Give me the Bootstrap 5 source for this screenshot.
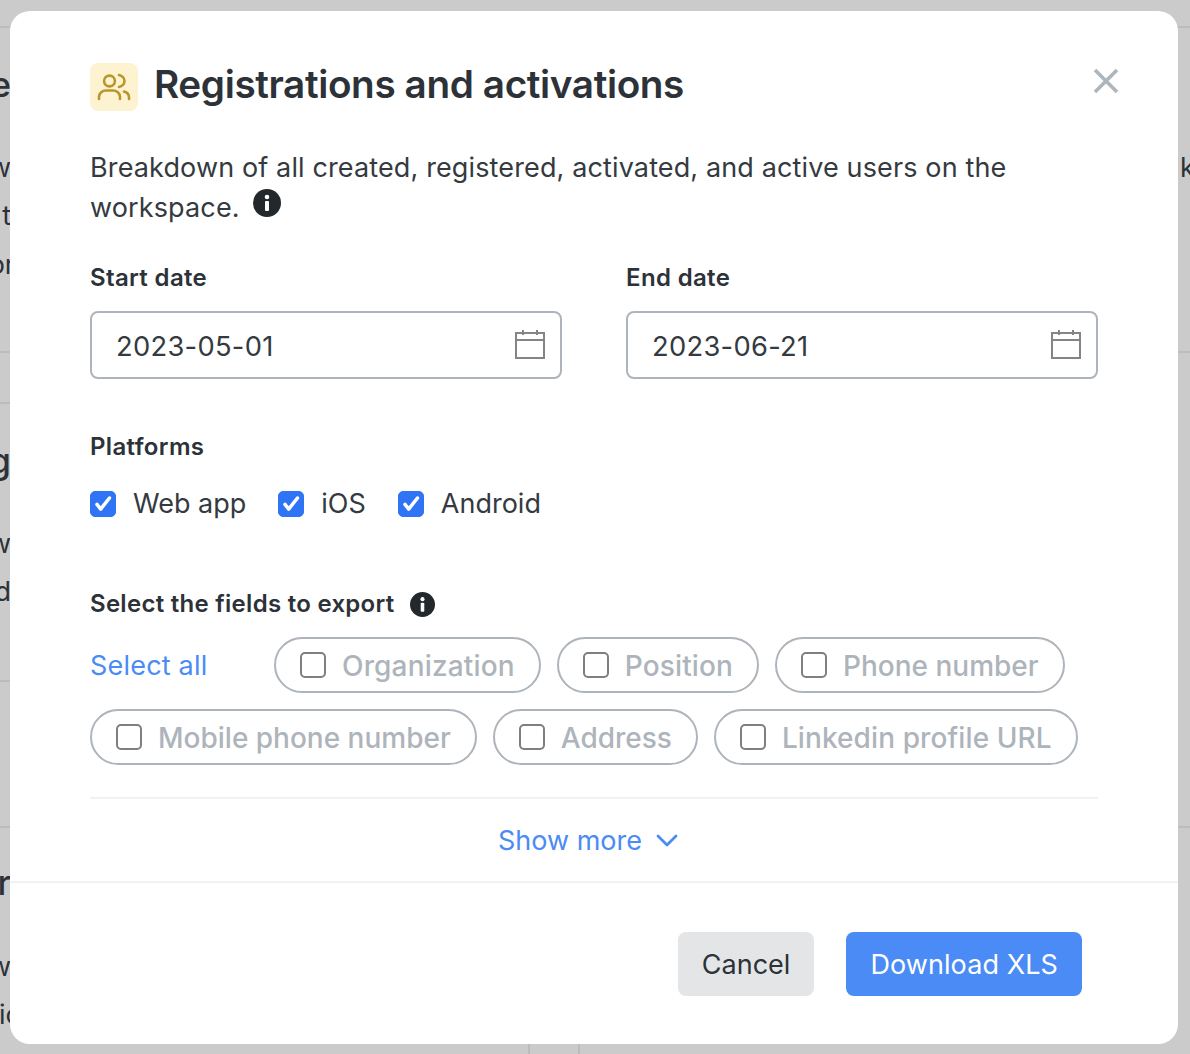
<!DOCTYPE html>
<html lang="en">
<head>
<meta charset="utf-8">
<title>Registrations and activations</title>
<link href="https://cdn.jsdelivr.net/npm/bootstrap@5.3.0/dist/css/bootstrap.min.css" rel="stylesheet">
<style>
html,body{height:100%;}
body{background:#cbcbcb;font-family:Inter,"Liberation Sans",sans-serif;color:#2c3238;overflow:hidden;position:relative;width:1190px;height:1054px;}
.bg-line{position:absolute;height:2px;background:#bcbcbc;left:0;width:1190px;}
.l1{top:26px}.l2{top:351px}.l3{top:402px;width:10px}.l4{top:680px;width:10px}.l5{top:826px}
.bg-vline{position:absolute;width:2px;background:#bcbcbc;top:1044px;height:10px;}
.v1{left:528px}.v2{left:578px}
.bg-txt{position:absolute;font-size:27px;line-height:32px;color:#2c3238;white-space:nowrap;right:1179px;}
.strong-t{font-weight:500;font-size:35px}
.t1{top:68px}.t2{top:152px}.t3{top:200px}.t4{top:249px;right:1175px}.t5{top:444px}.t6{top:528px}.t7{top:576px}.t8{top:866px}.t9{top:951px}.t10{top:999px;right:1169px}
.t11{top:152px;left:1180px;right:auto}
.sheet{position:absolute;left:10px;top:11px;width:1168px;height:1033px;border:0;border-radius:20px;background:#fff;display:flex;flex-direction:column;overflow:hidden;}
.sheet-main{padding:52px 80px 0;height:872px;flex:none;border-bottom:2px solid #f1f2f3;}
.head-row{height:48px;position:relative;}
.head-ico{width:48px;height:48px;border-radius:8px;background:#fdf3d0;flex:none;}
.head-title{font-size:38.7px;font-weight:600;line-height:48px;margin:-6px 0 0;letter-spacing:-.39px;color:#2c3238;}
.x-btn{position:absolute;right:-23px;top:3px;width:30px;height:30px;background:none;border:0;padding:0;line-height:0;}
.lead-txt{font-size:27px;line-height:40px;margin:37px 0 0;letter-spacing:.13px;color:#343a40;}
.info-big{margin-left:6px;vertical-align:.5px;}
.fld-label{font-size:24px;font-weight:600;line-height:32px;margin:0;letter-spacing:.35px;color:#2c3238;}
.date-row{column-gap:64px;margin-top:34px;}
.date-label{margin-bottom:17px;}
.date-wrap{position:relative;width:472px;}
.date-inp.form-control{height:68px;border:2px solid #aeb4bb;border-radius:8px;font-size:27.3px;letter-spacing:.3px;padding:2px 24px 0;color:#343a40;box-shadow:none;}
.date-ico{position:absolute;right:17px;top:18px;}
.plat-title{margin-top:52px;}
.plat-row{gap:32px;margin-top:25px;height:32px;}
.plat-item{display:flex;align-items:center;gap:17px;font-size:27px;line-height:32px;color:#343a40;}
.form-check-input.plat-chk{width:26px;height:26px;margin:0;border-radius:5px;border-color:#2f74f5;flex:none;background-color:#2f74f5;background-size:100% 100%;background-image:url("data:image/svg+xml,%3csvg xmlns='http://www.w3.org/2000/svg' viewBox='0 0 26 26'%3e%3cpath fill='none' stroke='%23fff' stroke-width='3.8' stroke-linecap='round' stroke-linejoin='round' d='M6.500 13.500l4 5 9.500-12'/%3e%3c/svg%3e");}
.export-title.fld-label{margin-top:68px;gap:16px;letter-spacing:.28px;}
.all-link{font-size:27px;line-height:58px;height:56px;color:#4a8bf5;text-decoration:none;width:168px;flex:none;letter-spacing:.2px;}
.chip{height:56px;border:2px solid #aeb4bb;border-radius:28px;padding:0 24px;display:flex;align-items:center;gap:16px;font-size:28px;line-height:54px;font-weight:500;color:#aeb4bb;}
.chip-txt{display:block;padding-top:2px;}
.sp-a{letter-spacing:.17px}.sp-b{letter-spacing:.12px}.sp-d{letter-spacing:.1px}
.form-check-input.chip-chk{width:26px;height:26px;margin:0;border:2px solid #7f7f7f;border-radius:5px;flex:none;background:#fff;}
.chips-box{row-gap:16px;column-gap:16px;margin-top:17px;}
.split{height:2px;background:#f1f2f3;margin-top:32px;}
.more-link{font-size:27px;line-height:32px;color:#4a8bf5;text-decoration:none;gap:14px;margin-top:26px;padding-right:12px;}
.foot-row{padding:49px 96px 0 0;gap:32px;}
.act-btn.btn{height:64px;font-size:27px;line-height:1;border-radius:8px;border:0;padding:0 24px;letter-spacing:0;}
.act-gray.btn{background:#e4e5e7;color:#2c3238;}
.act-blue.btn{background:#4a8bf5;color:#fff;letter-spacing:.09px;}
</style>
</head>
<body>
<div class="bg-line l1"></div>
<div class="bg-line l2"></div>
<div class="bg-line l3"></div>
<div class="bg-line l4"></div>
<div class="bg-line l5"></div>
<div class="bg-vline v1"></div>
<div class="bg-vline v2"></div>
<div class="bg-txt t1 strong-t">e</div>
<div class="bg-txt t2">w</div>
<div class="bg-txt t3">t</div>
<div class="bg-txt t4">or</div>
<div class="bg-txt t5 strong-t">g</div>
<div class="bg-txt t6">w</div>
<div class="bg-txt t7">d</div>
<div class="bg-txt t8 strong-t">r</div>
<div class="bg-txt t9">w</div>
<div class="bg-txt t10">ic</div>
<div class="bg-txt t11">k</div>

<div class="sheet">
  <div class="sheet-main">
    <div class="head-row d-flex align-items-center gap-3">
      <div class="head-ico d-flex align-items-center justify-content-center">
        <svg width="34" height="30" viewBox="0 0 34 30" fill="none" stroke="#b8962e" stroke-width="2.6" stroke-linecap="round"><circle cx="12.500" cy="9" r="5.4"/><path d="M2 27v-2c0-4 3.500-6.500 7-6.500h7c3.500 0 7 2.500 7 6.500v2"/><path d="M22 3c3 .6 5.500 3 5.500 6s-2.500 5.400-5.500 6"/><path d="M27 19.500c3 .8 5 3 5 6v1.500"/></svg>
      </div>
      <h1 class="head-title">Registrations and activations</h1>
      <button class="x-btn" type="button" aria-label="Close">
        <svg width="30" height="30" viewBox="0 0 30 30" fill="none" stroke="#aeb6bd" stroke-width="3.600"><path d="M4 4l22 22M26 4L4 26"/></svg>
      </button>
    </div>
    <p class="lead-txt">Breakdown of all created, registered, activated, and active users on the workspace.
      <svg class="info-big" width="28" height="28" viewBox="0 0 28 28"><circle cx="14" cy="14" r="14" fill="#23282d"/><rect x="12" y="12" width="4" height="10" rx="1" fill="#fff"/><circle cx="14" cy="8" r="2.300" fill="#fff"/></svg>
    </p>
    <div class="row gx-0 date-row">
      <div class="col-auto">
        <label class="fld-label d-block date-label">Start date</label>
        <div class="date-wrap">
          <input class="form-control date-inp" type="text" value="2023-05-01">
          <svg class="date-ico" width="30" height="30" viewBox="0 0 30 30" fill="none" stroke="#858585" stroke-width="2"><rect x="1" y="4" width="28" height="25"/><path d="M1 11h28M8 1v5M22 1v5"/></svg>
        </div>
      </div>
      <div class="col-auto">
        <label class="fld-label d-block date-label">End date</label>
        <div class="date-wrap">
          <input class="form-control date-inp" type="text" value="2023-06-21">
          <svg class="date-ico" width="30" height="30" viewBox="0 0 30 30" fill="none" stroke="#858585" stroke-width="2"><rect x="1" y="4" width="28" height="25"/><path d="M1 11h28M8 1v5M22 1v5"/></svg>
        </div>
      </div>
    </div>
    <p class="fld-label plat-title">Platforms</p>
    <div class="d-flex plat-row">
      <label class="plat-item"><input class="form-check-input plat-chk" type="checkbox" checked>Web app</label>
      <label class="plat-item"><input class="form-check-input plat-chk" type="checkbox" checked>iOS</label>
      <label class="plat-item"><input class="form-check-input plat-chk" type="checkbox" checked>Android</label>
    </div>
    <p class="fld-label d-flex align-items-center export-title">Select the fields to export
      <svg width="25" height="25" viewBox="0 0 28 28"><circle cx="14" cy="14" r="14" fill="#23282d"/><rect x="12" y="12" width="4" height="10" rx="1" fill="#fff"/><circle cx="14" cy="8" r="2.300" fill="#fff"/></svg>
    </p>
    <div class="d-flex flex-wrap chips-box">
      <a class="all-link" href="#">Select all</a>
      <label class="chip"><input class="form-check-input chip-chk" type="checkbox"><span class="chip-txt sp-a">Organization</span></label>
      <label class="chip"><input class="form-check-input chip-chk" type="checkbox"><span class="chip-txt sp-b">Position</span></label>
      <label class="chip"><input class="form-check-input chip-chk" type="checkbox"><span class="chip-txt">Phone number</span></label>
      <label class="chip"><input class="form-check-input chip-chk" type="checkbox"><span class="chip-txt">Mobile phone number</span></label>
      <label class="chip"><input class="form-check-input chip-chk" type="checkbox"><span class="chip-txt">Address</span></label>
      <label class="chip"><input class="form-check-input chip-chk" type="checkbox"><span class="chip-txt sp-d">Linkedin profile URL</span></label>
    </div>
    <div class="split"></div>
    <a class="more-link d-flex align-items-center justify-content-center" href="#">Show more
      <svg width="22" height="14" viewBox="0 0 22 14" fill="none" stroke="#4a8bf5" stroke-width="2.800" stroke-linecap="round" stroke-linejoin="round"><path d="M2 2l9 9 9-9"/></svg>
    </a>
  </div>
  <div class="foot-row d-flex justify-content-end">
    <button class="btn act-btn act-gray" type="button">Cancel</button>
    <button class="btn act-btn act-blue" type="button">Download XLS</button>
  </div>
</div>
<script src="https://cdn.jsdelivr.net/npm/bootstrap@5.3.0/dist/js/bootstrap.bundle.min.js"></script>
</body>
</html>
